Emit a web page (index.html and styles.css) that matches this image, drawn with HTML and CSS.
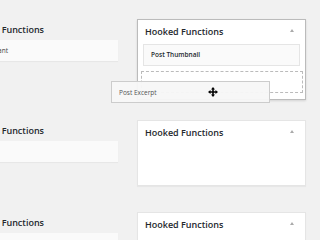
FILE: index.html
```html
<!DOCTYPE html>
<html lang="en">
<head>
    <meta charset="UTF-8">
    <title>Hooked Functions</title>
    <link rel="stylesheet" href="styles.css">
</head>
<body>

<section class="row row-first">
    <div class="available">
        <h3 class="available-title">Available Functions</h3>
        <div class="available-item">Post Comments Important</div>
    </div>
    <div class="card card-active">
        <div class="card-head">
            <h2>Hooked Functions</h2>
            <span class="toggle"></span>
        </div>
        <div class="card-body">
            <div class="hooked-item">Post Thumbnail</div>
            <div class="placeholder"></div>
        </div>
        <div class="dragging">
            <span>Post Excerpt</span>
            <svg class="move-cursor" width="10" height="10" viewBox="0 0 10 10">
                <path d="M5 0 L7 2.5 H5.8 V4.2 H7.5 V3 L10 5 L7.5 7 V5.8 H5.8 V7.5 H7 L5 10 L3 7.5 H4.2 V5.8 H2.5 V7 L0 5 L2.5 3 V4.2 H4.2 V2.5 H3 Z" fill="#000"/>
            </svg>
        </div>
    </div>
</section>

<section class="row row-second">
    <div class="available">
        <h3 class="available-title">Available Functions</h3>
        <div class="available-item"></div>
    </div>
    <div class="card">
        <div class="card-head">
            <h2>Hooked Functions</h2>
            <span class="toggle"></span>
        </div>
    </div>
</section>

<section class="row row-third">
    <div class="available">
        <h3 class="available-title">Available Functions</h3>
        <div class="available-item"></div>
    </div>
    <div class="card">
        <div class="card-head">
            <h2>Hooked Functions</h2>
            <span class="toggle"></span>
        </div>
    </div>
</section>

</body>
</html>
```

FILE: styles.css
```css
body {
    margin: 0;
    padding: 0;
    background-color: #f1f1f1;
    font-family: "Open Sans", sans-serif;
    color: #23282d;
    overflow: hidden;
    height: 240px;
}

.row {
    display: flex;
    align-items: flex-start;
    gap: 19px;
}

.row-first {
    margin-top: 19px;
}

.row-second {
    margin-top: 20px;
}

.row-third {
    margin-top: 26px;
}

.available {
    flex: none;
    width: 230px;
    margin-left: -112px;
    padding-top: 4px;
}

.available-title {
    margin: 0 0 3px 0;
    font-size: 9px;
    line-height: 14px;
    font-weight: 600;
    text-align: right;
    padding-right: 74px;
}

.available-item {
    height: 21px;
    background-color: #fafafa;
    box-shadow: 0 1px 1px rgba(0, 0, 0, 0.04);
    font-size: 6.5px;
    line-height: 21px;
    text-align: right;
    padding-right: 110px;
    color: #444;
}

.card {
    position: relative;
    flex: none;
    width: 167px;
    min-height: 64px;
    background-color: #fff;
    border: 1px solid #e5e5e5;
    box-shadow: 0 1px 1px rgba(0, 0, 0, 0.04);
}

.card-active {
    min-height: 0;
    border-color: #bbb;
    box-shadow: 0 1px 2px rgba(0, 0, 0, 0.12);
}

.card-head {
    display: flex;
    justify-content: space-between;
    align-items: center;
    padding: 5px 11px 0 7px;
}

.card-head h2 {
    margin: 0;
    font-size: 9px;
    line-height: 13px;
    font-weight: 600;
}

.toggle {
    width: 0;
    height: 0;
    border-left: 2px solid transparent;
    border-right: 2px solid transparent;
    border-bottom: 3px solid #aaa;
    margin-top: -2px;
}

.card-body {
    padding: 6px 2px 6px 3px;
}

.hooked-item {
    margin: 0 3px 0 2px;
    height: 20px;
    border: 1px solid #e5e5e5;
    background-color: #fafafa;
    font-size: 6.5px;
    font-weight: 600;
    line-height: 20px;
    padding-left: 7px;
}

.placeholder {
    margin-top: 5px;
    height: 20px;
    border: 1px dashed #bbb;
}

.dragging {
    position: absolute;
    left: -27px;
    top: 61px;
    width: 145px;
    height: 20px;
    padding-left: 7px;
    padding-right: 5px;
    display: flex;
    align-items: center;
    background-color: rgba(247, 247, 247, 0.95);
    border: 1px solid #ccc;
    font-size: 6.5px;
    color: #555;
}

.move-cursor {
    margin-left: 51px;
}
```
